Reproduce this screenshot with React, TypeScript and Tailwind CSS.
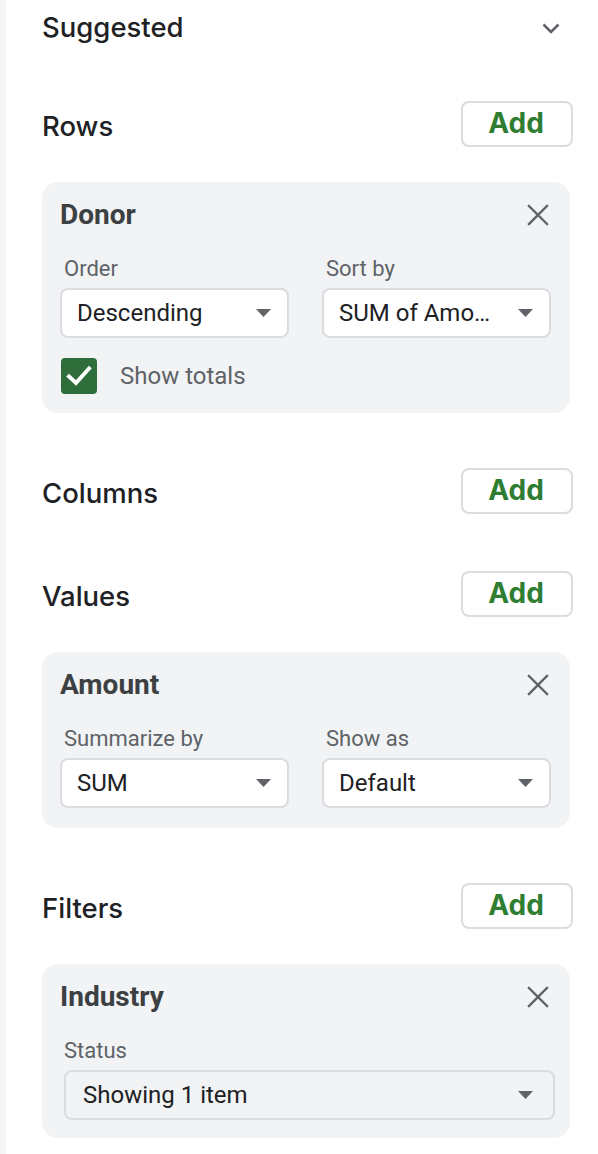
import React from "react";

const HEAD = { fontFamily: "Inter, 'Open Sans', sans-serif" } as const;
const ROBO = { fontFamily: "Roboto, 'Liberation Sans', sans-serif" } as const;

function Caret() {
  return (
    <svg width="15" height="8" viewBox="0 0 15 8" className="shrink-0">
      <path d="M0 0 L15 0 L7.5 8 Z" fill="#5f6368" />
    </svg>
  );
}

function CloseIcon() {
  return (
    <svg width="22" height="22" viewBox="0 0 22 22" className="shrink-0">
      <path d="M2 2 L20 20 M20 2 L2 20" stroke="#5f6368" strokeWidth="2.4" strokeLinecap="square" />
    </svg>
  );
}

function Dropdown({ text, className = "" }: { text: string; className?: string }) {
  return (
    <div
      className={`h-[50px] flex items-center justify-between pl-[15px] pr-[16px] bg-white border-2 border-[#dadce0] rounded-[8px] ${className}`}
    >
      <span className="text-[24px] text-[#202124] truncate" style={ROBO}>
        {text}
      </span>
      <Caret />
    </div>
  );
}

function SectionHeader({ title }: { title: string }) {
  return (
    <div className="flex items-center justify-between h-[46px] pr-[25px]">
      <span className="text-[27.5px] font-medium text-[#202124] mt-[6px]" style={HEAD}>
        {title}
      </span>
      <button className="w-[112px] h-[46px] border-2 border-[#dadce0] rounded-[8px] bg-white flex items-center justify-center">
        <span className="text-[28px] font-bold text-[#2e7d32] -mt-[2px] -ml-[2px]" style={HEAD}>
          Add
        </span>
      </button>
    </div>
  );
}

function Card({ title, children, pb = "pb-[19px]" }: { title: string; children: React.ReactNode; pb?: string }) {
  return (
    <div className={`mr-[28px] bg-[#f1f3f4] rounded-[16px] pt-[17px] pl-[18px] pr-[19px] ${pb}`}>
      <div className="flex items-center justify-between h-[32px]">
        <span className="text-[28px] font-bold text-[#3c4043]" style={ROBO}>
          {title}
        </span>
        <div className="mr-[2px]">
          <CloseIcon />
        </div>
      </div>
      {children}
    </div>
  );
}

function Label({ text }: { text: string }) {
  return (
    <div className="h-[24px] leading-[24px] mt-[26px] mb-[7px] pl-[4px] text-[22px] text-[#5f6368]" style={ROBO}>
      {text}
    </div>
  );
}

export default function App() {
  return (
    <div className="w-[598px] h-[1154px] bg-white flex overflow-hidden">
      <div className="w-[6px] h-full bg-[#f5f5f5] shrink-0" />
      <div className="flex-1 pl-[36px]">
        <div className="flex items-center justify-between h-[56px] pr-[38px]">
          <span className="text-[27.5px] font-medium text-[#202124]" style={HEAD}>
            Suggested
          </span>
          <svg width="18" height="11" viewBox="0 0 18 11">
            <path d="M1.5 1.5 L9 9 L16.5 1.5" stroke="#5f6368" strokeWidth="2.6" fill="none" />
          </svg>
        </div>

        <div className="mt-[45px]">
          <SectionHeader title="Rows" />
        </div>
        <div className="mt-[35px]">
          <Card title="Donor">
            <div className="flex gap-[33px]">
              <div className="flex-1">
                <Label text="Order" />
                <Dropdown text="Descending" />
              </div>
              <div className="flex-1">
                <Label text="Sort by" />
                <Dropdown text="SUM of Amo…" />
              </div>
            </div>
            <div className="flex items-center mt-[20px] h-[36px]">
              <div className="w-[36px] h-[36px] rounded-[4px] bg-[#2f6e3b] flex items-center justify-center ml-[1px]">
                <svg width="26" height="22" viewBox="0 0 26 22">
                  <path d="M3 11.5 L10 18 L23 3.5" stroke="white" strokeWidth="4" fill="none" strokeLinecap="square" />
                </svg>
              </div>
              <span className="ml-[23px] text-[24px] text-[#5f6368]" style={ROBO}>
                Show totals
              </span>
            </div>
          </Card>
        </div>

        <div className="mt-[55px]">
          <SectionHeader title="Columns" />
        </div>
        <div className="mt-[57px]">
          <SectionHeader title="Values" />
        </div>
        <div className="mt-[35px]">
          <Card title="Amount" pb="pb-[20px]">
            <div className="flex gap-[33px]">
              <div className="flex-1">
                <Label text="Summarize by" />
                <Dropdown text="SUM" />
              </div>
              <div className="flex-1">
                <Label text="Show as" />
                <Dropdown text="Default" />
              </div>
            </div>
          </Card>
        </div>

        <div className="mt-[55px]">
          <SectionHeader title="Filters" />
        </div>
        <div className="mt-[35px]">
          <Card title="Industry" pb="pb-[18px]">
            <Label text="Status" />
            <div className="ml-[4px] -mr-[4px] h-[50px] flex items-center justify-between pl-[17px] pr-[20px] bg-[#f1f3f4] border-2 border-[#dadce0] rounded-[8px]">
              <span className="text-[24px] text-[#202124]" style={ROBO}>
                Showing 1 item
              </span>
              <Caret />
            </div>
          </Card>
        </div>
      </div>
    </div>
  );
}
